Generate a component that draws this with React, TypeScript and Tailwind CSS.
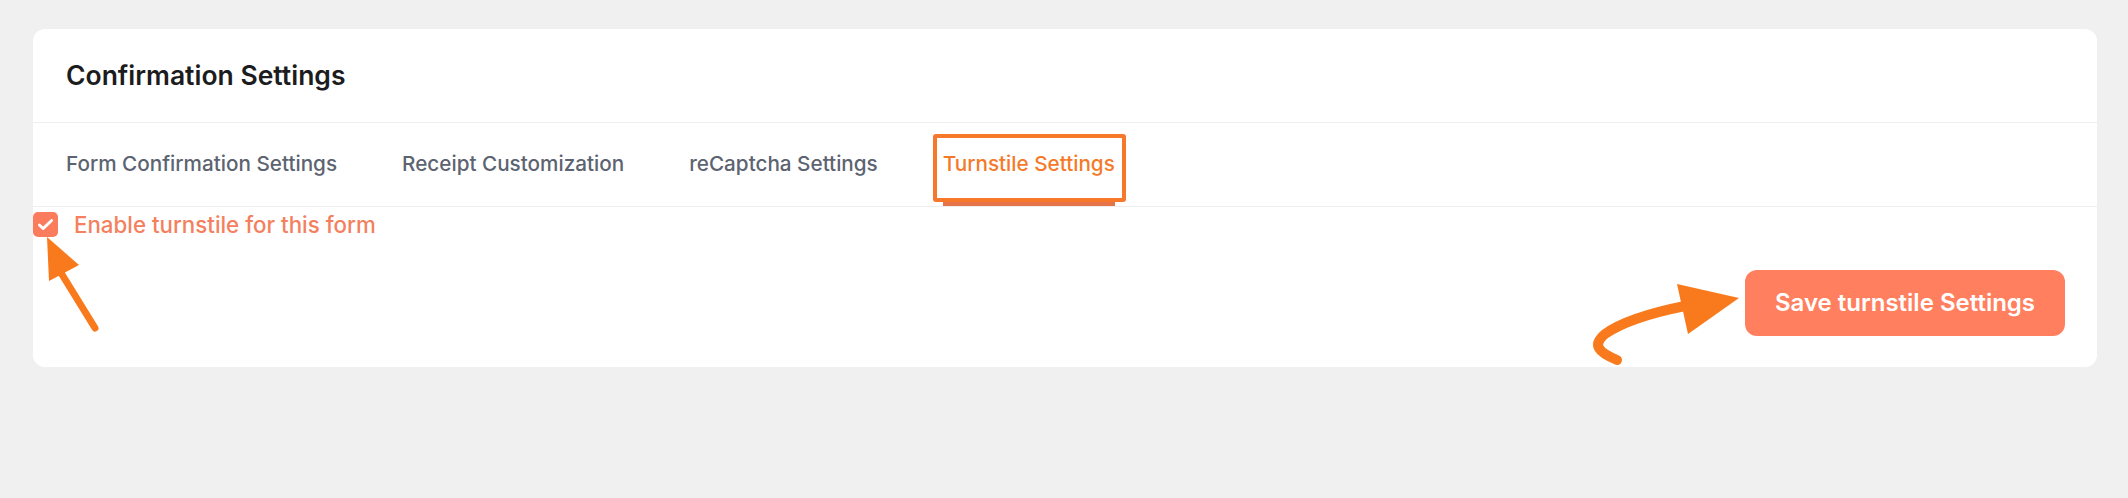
import React, { useState } from 'react';

const tabs = ['Form Confirmation Settings', 'Receipt Customization', 'reCaptcha Settings', 'Turnstile Settings'];

const App: React.FC = () => {
  const [active, setActive] = useState(3);
  const [enabled, setEnabled] = useState(true);

  return (
    <div className="min-h-[498px] bg-[#f0f0f0] pl-[33px] pr-[31px] pt-[29px] font-['Inter',sans-serif]">
      <div className="relative rounded-xl bg-white">
        {/* Header */}
        <div className="flex h-[94px] items-center border-b border-[#eeeeee] px-[33px]">
          <h2 className="text-[26.5px] font-semibold text-[#1c1c1e]">Confirmation Settings</h2>
        </div>

        {/* Tabs */}
        <div className="flex h-[84px] items-stretch gap-[65px] border-b border-[#eeeeee] px-[33px]">
          {tabs.map((t, i) => (
            <button
              key={t}
              onClick={() => setActive(i)}
              className={`relative flex items-center pb-px text-[20.7px] font-medium ${
                i === active ? 'text-[#f47a2a]' : 'text-[#5c6371]'
              }`}
            >
              {t}
              {i === active && (
                <>
                  <span className="absolute -left-[10px] -right-[11px] top-[11px] bottom-[4px] rounded-[3px] border-[4px] border-[#f7782a]" />
                  <span className="absolute left-0 right-0 bottom-0 h-[4px] bg-[#e6744a]" />
                </>
              )}
            </button>
          ))}
        </div>

        {/* Body */}
        <div className="flex h-[160px] flex-col justify-between pb-[31px] pr-[32px]">
          <label className="flex cursor-pointer items-center gap-[16px] pt-px">
            <span
              onClick={() => setEnabled(!enabled)}
              className={`flex h-[25px] w-[25px] items-center justify-center rounded-[5px] ${
                enabled ? 'bg-[#fb7b5d]' : 'border border-gray-300 bg-white'
              }`}
            >
              {enabled && (
                <svg viewBox="0 0 24 24" className="h-[21px] w-[21px]" fill="none" stroke="white" strokeWidth="3.2" strokeLinecap="round" strokeLinejoin="round">
                  <path d="M5 12.5l4.2 4.2L19 7.5" />
                </svg>
              )}
            </span>
            <span className="text-[22.3px] font-medium text-[#f4805e]">Enable turnstile for this form</span>
          </label>

          <div className="flex justify-end">
            <button className="flex h-[66px] w-[320px] items-center justify-center rounded-xl bg-[#ff7f5f] text-[24px] font-semibold text-white">
              Save turnstile Settings
            </button>
          </div>
        </div>

        {/* Annotation arrows */}
        <svg className="pointer-events-none absolute left-0 top-0 h-[340px] w-full overflow-visible" viewBox="0 0 2064 340" preserveAspectRatio="none">
          <g transform="translate(-33,-29)">
            <polygon points="47,237 49,281 79,265" fill="#f97a1c" />
            <path d="M58,268 L95,328" stroke="#f97a1c" strokeWidth="7" strokeLinecap="round" fill="none" />
            <path d="M1617,360 C1598,352 1592,345 1605,334 C1622,322 1650,313 1685,306" stroke="#f97a1c" strokeWidth="10" strokeLinecap="round" fill="none" />
            <polygon points="1677,284 1739,298 1688,334" fill="#f97a1c" />
          </g>
        </svg>
      </div>
    </div>
  );
};

export default App;
